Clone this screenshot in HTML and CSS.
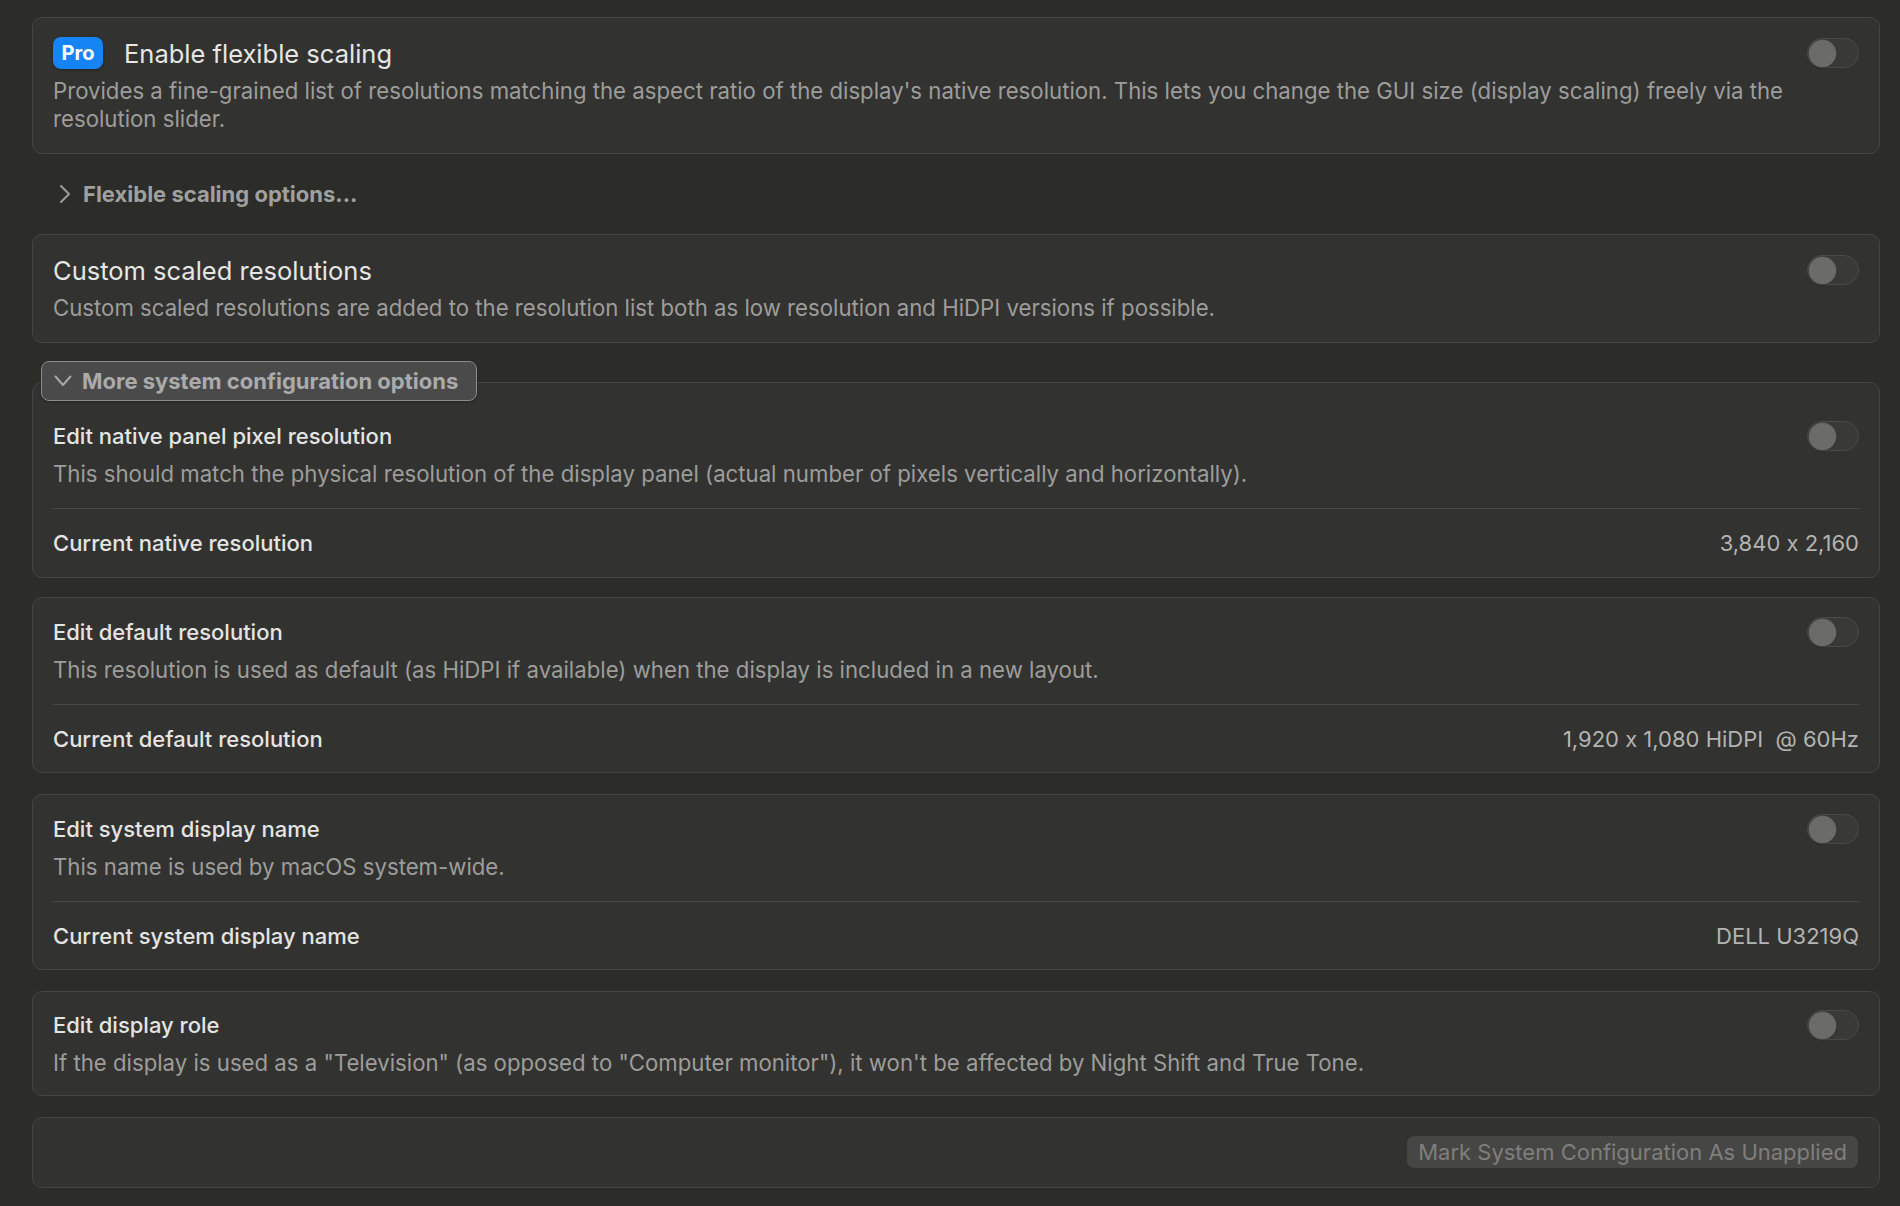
FILE: index.html
```html
<!DOCTYPE html>
<html lang="en">
<head>
<meta charset="utf-8">
<title>Display configuration</title>
<link rel="stylesheet" href="styles.css">
</head>
<body>
<main class="page">

  <section class="card">
    <div class="head">
      <div class="head-title">
        <span class="pro">Pro</span>
        <span class="title-lg">Enable flexible scaling</span>
      </div>
      <span class="toggle"><span class="knob"></span></span>
    </div>
    <p class="desc desc-lg">Provides a fine-grained list of resolutions matching the aspect ratio of the display's native resolution. This lets you change the GUI size (display scaling) freely via the resolution slider.</p>
  </section>

  <div class="expander">
    <svg class="chev" width="12" height="20" viewBox="0 0 12 20"><path d="M2 2 L10 10 L2 18" fill="none" stroke="#9c9c9a" stroke-width="2" stroke-linecap="round" stroke-linejoin="round"/></svg>
    <span>Flexible scaling options...</span>
  </div>

  <section class="card">
    <div class="head">
      <span class="title-lg">Custom scaled resolutions</span>
      <span class="toggle"><span class="knob"></span></span>
    </div>
    <p class="desc desc-lg">Custom scaled resolutions are added to the resolution list both as low resolution and HiDPI versions if possible.</p>
  </section>

  <div class="group">
    <div class="group-btn">
      <svg class="chev-down" width="18" height="12" viewBox="0 0 18 12"><path d="M1.5 1.5 L9 10 L16.5 1.5" fill="none" stroke="#a8a8a8" stroke-width="2" stroke-linecap="round" stroke-linejoin="round"/></svg>
      <span>More system configuration options</span>
    </div>

    <section class="card card-first">
      <div class="sec">
        <div class="row-head">
          <span class="title">Edit native panel pixel resolution</span>
          <span class="toggle"><span class="knob"></span></span>
        </div>
        <p class="desc">This should match the physical resolution of the display panel (actual number of pixels vertically and horizontally).</p>
      </div>
      <div class="divider"></div>
      <div class="value-row">
        <span class="title">Current native resolution</span>
        <span class="value">3,840 x 2,160</span>
      </div>
    </section>

    <section class="card card-gap">
      <div class="sec">
        <div class="row-head">
          <span class="title">Edit default resolution</span>
          <span class="toggle"><span class="knob"></span></span>
        </div>
        <p class="desc">This resolution is used as default (as HiDPI if available) when the display is included in a new layout.</p>
      </div>
      <div class="divider"></div>
      <div class="value-row">
        <span class="title">Current default resolution</span>
        <span class="value">1,920 x 1,080 HiDPI&nbsp; @ 60Hz</span>
      </div>
    </section>

    <section class="card">
      <div class="sec">
        <div class="row-head">
          <span class="title">Edit system display name</span>
          <span class="toggle"><span class="knob"></span></span>
        </div>
        <p class="desc">This name is used by macOS system-wide.</p>
      </div>
      <div class="divider"></div>
      <div class="value-row">
        <span class="title">Current system display name</span>
        <span class="value">DELL U3219Q</span>
      </div>
    </section>

    <section class="card">
      <div class="sec sec-solo">
        <div class="row-head">
          <span class="title">Edit display role</span>
          <span class="toggle"><span class="knob"></span></span>
        </div>
        <p class="desc">If the display is used as a "Television" (as opposed to "Computer monitor"), it won't be affected by Night Shift and True Tone.</p>
      </div>
    </section>

    <section class="card card-actions">
      <span class="btn-disabled">Mark System Configuration As Unapplied</span>
    </section>
  </div>

</main>
</body>
</html>
```

FILE: styles.css
```css
html, body {
  margin: 0;
  padding: 0;
  background: #2c2c29;
}

body {
  font-family: Inter, "Noto Sans", "Liberation Sans", sans-serif;
  font-feature-settings: "calt" 0;
  color: #e4e4e2;
  -webkit-font-smoothing: antialiased;
}

.page {
  width: 1848px;
  padding: 17px 20px 0 32px;
}

/* ---------- cards ---------- */
.card {
  background: #323230;
  border: 1px solid #454543;
  border-radius: 10px;
  padding: 0;
}

.card + .card {
  margin-top: 21px;
}

.card-first + .card-gap {
  margin-top: 19px;
}

.page > .card {
  padding: 17px 20px 20px;
}

.head {
  display: flex;
  align-items: center;
  justify-content: space-between;
  height: 36px;
}

.head-title {
  display: flex;
  align-items: center;
}

.pro {
  display: inline-flex;
  align-items: center;
  justify-content: center;
  width: 50px;
  height: 32px;
  margin-right: 21px;
  border-radius: 8px;
  background: #1784f6;
  color: #ffffff;
  font-weight: 700;
  font-size: 20px;
  box-shadow: 0 1px 3px rgba(0, 0, 0, 0.35);
}

.title-lg {
  font-size: 25.5px;
  font-weight: 400;
  color: #e6e6e4;
}

.desc {
  margin: 10px 0 0;
  font-size: 22.2px;
  line-height: 26px;
  color: #9d9d9b;
}

.desc-lg {
  margin-top: 6px;
  line-height: 28px;
}

/* ---------- toggle ---------- */
.toggle {
  position: relative;
  box-sizing: border-box;
  width: 52px;
  height: 30px;
  flex: none;
  border-radius: 15px;
  background: #393937;
  border: 1px solid #4a4a48;
}

.knob {
  position: absolute;
  left: 0.5px;
  top: 0.5px;
  width: 27px;
  height: 27px;
  border-radius: 50%;
  background: #6b6b69;
  box-shadow: 0 0 0 0.5px #555553, 0 1px 2px rgba(0, 0, 0, 0.3);
}

/* ---------- disclosure rows ---------- */
.expander {
  display: flex;
  align-items: center;
  height: 40px;
  margin: 20px 0;
  padding-left: 27px;
  color: #a0a09e;
  font-size: 22px;
  font-weight: 700;
}

.chev {
  margin-right: 12px;
}

.group {
  margin-top: 18px;
}

.group-btn {
  position: relative;
  z-index: 1;
  display: flex;
  align-items: center;
  box-sizing: border-box;
  width: max-content;
  height: 40px;
  margin-left: 9px;
  margin-bottom: -19px;
  padding: 0 18px 0 12px;
  border: 1.5px solid #8c8c8c;
  border-radius: 8px;
  background: #4a4a4b;
  color: #ababab;
  font-size: 22px;
  font-weight: 700;
  box-shadow: 0 1px 3px rgba(0, 0, 0, 0.3);
}

.chev-down {
  margin-right: 10px;
}

/* ---------- grouped settings ---------- */
.sec {
  padding: 19px 20px 21px;
}

.card-first .sec {
  padding-top: 38px;
}

.sec-solo {
  padding: 18px 20px 19px;
}

.row-head {
  display: flex;
  align-items: center;
  justify-content: space-between;
  height: 30px;
}

.title {
  font-size: 22px;
  font-weight: 500;
  color: #e4e4e2;
}

.divider {
  height: 1px;
  margin: 0 20px;
  background: #4a4a48;
}

.value-row {
  display: flex;
  align-items: center;
  justify-content: space-between;
  height: 26px;
  padding: 21px 20px 20px;
}

.card-first .value-row {
  padding-bottom: 21px;
}

.value {
  font-size: 22px;
  color: #b4b4b2;
}

.card-actions {
  display: flex;
  justify-content: flex-end;
  padding: 18px 21px 19px;
}

.btn-disabled {
  display: inline-flex;
  align-items: center;
  height: 32px;
  padding: 0 11px;
  border-radius: 7px;
  background: #464644;
  color: #7f7f7d;
  font-size: 22px;
}
```
